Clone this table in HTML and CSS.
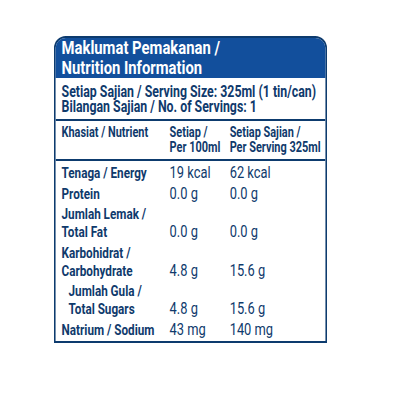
FILE: index.html
```html
<!DOCTYPE html>
<html>
<head>
<meta charset="utf-8">
<link rel="stylesheet" href="styles.css">
</head>
<body>
<div class="label">
  <div class="head">Maklumat Pemakanan /<br>Nutrition Information</div>
  <div class="serving">
    <div>Setiap Sajian / Serving Size: 325ml (1 tin/can)</div>
    <div>Bilangan Sajian / No. of Servings: 1</div>
  </div>
  <div class="grid colhead">
    <div class="n">Khasiat / Nutrient</div>
    <div class="v">Setiap /<br>Per 100ml</div>
    <div class="v">Setiap Sajian /<br>Per Serving 325ml</div>
  </div>
  <div class="grid rows">
    <div class="n">Tenaga / Energy</div><div class="val">19 kcal</div><div class="val">62 kcal</div>
    <div class="n">Protein</div><div class="val">0.0 g</div><div class="val">0.0 g</div>
    <div class="n">Jumlah Lemak /<br>Total Fat</div><div class="val">0.0 g</div><div class="val">0.0 g</div>
    <div class="n">Karbohidrat /<br>Carbohydrate</div><div class="val">4.8 g</div><div class="val">15.6 g</div>
    <div class="n sub">Jumlah Gula /<br>Total Sugars</div><div class="val">4.8 g</div><div class="val">15.6 g</div>
    <div class="n">Natrium / Sodium</div><div class="val">43 mg</div><div class="val">140 mg</div>
  </div>
</div>
</body>
</html>
```
FILE: styles.css
```css
html, body { margin: 0; padding: 0; background: #fff; overflow: hidden; }
body {
  font-family: Roboto, "Liberation Sans", sans-serif;
  color: #0f3a6c;
  padding: 36px 0 0 54px;
}
.label {
  box-sizing: border-box;
  width: 350px;
  border: 2px solid #0d3b6e;
  border-left-width: 2.6px;
  border-right-width: 2.6px;
  border-radius: 15px 15px 0 0 / 12px 12px 0 0;
  overflow: hidden;
  transform: scaleX(0.78);
  transform-origin: 0 0;
  white-space: nowrap;
}
.head {
  background: #124f9c;
  color: #fff;
  font-weight: bold;
  font-size: 19px;
  line-height: 20px;
  margin: -2px -2.6px 0;
  padding: 2px 7.7px 0 10.3px;
}
.serving {
  font-weight: bold;
  font-size: 15.8px;
  line-height: 15px;
  padding: 5.5px 7.7px 5.5px;
  border-bottom: 2px solid #0d3b6e;
}
.grid {
  display: grid;
  grid-template-columns: 138.5px 77px 1fr;
  padding: 0 7.7px;
}
.colhead {
  font-weight: bold;
  font-size: 14px;
  line-height: 15px;
  padding-top: 3.5px;
  padding-bottom: 4.5px;
  border-bottom: 2px solid #0d3b6e;
}
.rows {
  font-size: 15px;
  line-height: 18px;
  padding-top: 3px;
  padding-bottom: 2.5px;
  row-gap: 2.5px;
}
.n { font-weight: bold; }
.sub { padding-left: 9px; }
.val { align-self: end; font-weight: normal; font-size: 16.5px; }
```
